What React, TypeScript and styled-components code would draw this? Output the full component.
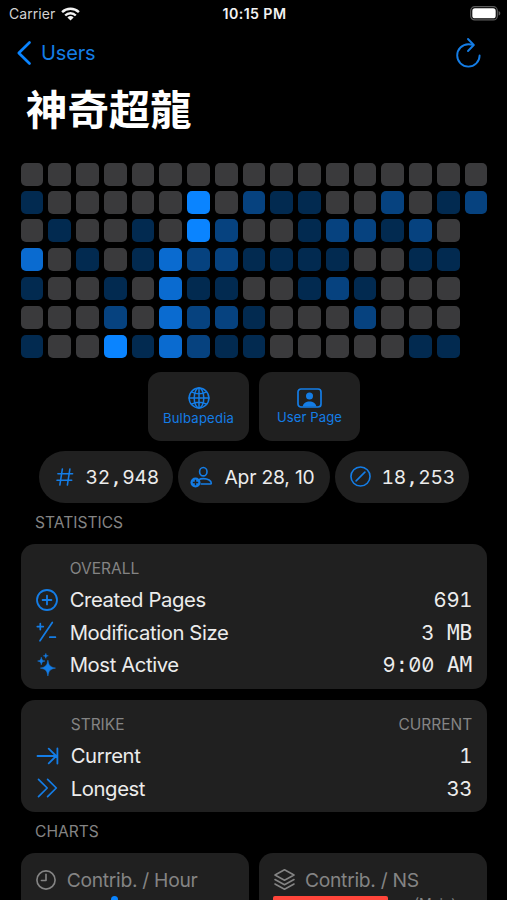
import React from "react";
import styled, { createGlobalStyle } from "styled-components";

const BLUE = "#0a84ff";
const ICON_BLUE = "#147de6";
const CARD = "#202020";
const MUTED = "#848484";

const GlobalStyle = createGlobalStyle`
  html, body { margin: 0; background: #000; }
  body {
    height: 900px;
    overflow: hidden;
    font-family: Inter, "Noto Sans CJK TC", sans-serif;
    color: #ececec;
    -webkit-font-smoothing: antialiased;
  }
  svg { display: block; flex: none; overflow: visible; }
`;

const Screen = styled.main`
  width: 507px;
  height: 900px;
  overflow: hidden;
  display: flex;
  flex-direction: column;
  background: #000;

  & > * {
    flex: none;
  }
`;

const StatusBar = styled.header`
  display: grid;
  grid-template-columns: 1fr auto 1fr;
  align-items: center;
  height: 27px;
  padding: 0 7px 0 9px;
  box-sizing: border-box;
  font-size: 14px;
  line-height: 27px;
`;

const Carrier = styled.div`
  display: flex;
  align-items: center;
  gap: 6px;
  color: #d2d2d2;
  letter-spacing: 0.05px;
`;

const Time = styled.time`
  font-weight: 600;
  font-size: 14.2px;
  letter-spacing: 0.4px;
  color: #f2f2f2;
`;

const Battery = styled.div`
  justify-self: end;
`;

const NavBar = styled.nav`
  display: flex;
  align-items: center;
  justify-content: space-between;
  height: 51px;
  padding: 0 26px 0 17px;
`;

const BackLink = styled.a`
  display: flex;
  align-items: center;
  gap: 10px;
  color: #147de6;
  font-size: 20px;
  line-height: 24px;
  letter-spacing: -0.15px;
`;

const Title = styled.h1`
  margin: 0;
  height: 85.3px;
  padding-left: 26px;
  font: 700 41.4px/59px "Noto Sans CJK TC", sans-serif;
  color: #fff;
`;

const HeatMap = styled.div`
  display: grid;
  grid-template-columns: repeat(17, 22.8px);
  grid-template-rows: 28px 28px 29px 29px 28.8px 29px 23px;
  column-gap: 4.96px;
  padding-left: 20.7px;
`;

const levels = ["#3a3a3c", "#022a50", "#06427f", "#0a6bd0", "#0a84ff"];

const Day = styled.i<{ $level: number; $row: number; $column: number }>`
  grid-row: ${(p) => p.$row};
  grid-column: ${(p) => p.$column};
  height: 23px;
  border-radius: 5px;
  background: ${(p) => levels[p.$level]};
`;

const LinkTiles = styled.div`
  display: flex;
  justify-content: center;
  gap: 10px;
  margin-top: 14.4px;
  padding-left: 1px;
`;

const Tile = styled.a<{ $wide?: boolean }>`
  width: 101px;
  height: 68.5px;
  box-sizing: border-box;
  padding-top: ${(p) => (p.$wide ? 16 : 15)}px;
  border-radius: 13px;
  background: ${CARD};
  display: flex;
  flex-direction: column;
  align-items: center;
  gap: 1px;
  color: ${ICON_BLUE};
  font-size: 13.1px;
  line-height: 16px;
  letter-spacing: ${(p) => (p.$wide ? 0.1 : 0.2)}px;
`;

const Pills = styled.div`
  display: grid;
  grid-template-columns: 134px 152px 134px;
  justify-content: center;
  gap: 5px;
  margin-top: 9.7px;
`;

const Pill = styled.div<{ $gap: number; $inset: number }>`
  height: 52px;
  box-sizing: border-box;
  padding-left: ${(p) => p.$inset}px;
  border-radius: 26px;
  background: ${CARD};
  display: flex;
  align-items: center;
  gap: ${(p) => p.$gap}px;
  font-size: 19.3px;
  white-space: nowrap;
`;

const DateText = styled.span`
  letter-spacing: -0.2px;
`;

const FixedWidth = styled.span`
  font-feature-settings: "tnum", "zero";
  letter-spacing: -0.2px;
  white-space: pre;
`;

const Glyphs = styled.span`
  font-family: "DejaVu Sans Mono", monospace;
  font-size: 1.04em;
  line-height: 1;
  letter-spacing: 0;
`;

const SectionLabel = styled.h2<{ $height: number; $line: number }>`
  margin: 0;
  height: ${(p) => p.$height}px;
  padding-left: 35px;
  font-size: 15.6px;
  font-weight: 400;
  line-height: ${(p) => p.$line}px;
  color: ${MUTED};
`;

const Card = styled.section<{ $height: number }>`
  height: ${(p) => p.$height}px;
  box-sizing: border-box;
  margin: 0 19.7px 10.5px 20.7px;
  padding: 14px 15px 0 15px;
  border-radius: 14px;
  background: ${CARD};
`;

const CardHeading = styled.div<{ $indent: number }>`
  display: flex;
  justify-content: space-between;
  padding-left: ${(p) => p.$indent}px;
  height: 26px;
  font-size: 15.5px;
  line-height: 21.5px;
  color: ${MUTED};
`;

const Row = styled.div<{ $gap?: number }>`
  display: grid;
  grid-template-columns: 23px 1fr auto;
  column-gap: ${(p) => p.$gap ?? 11}px;
  align-items: center;
  height: 32.4px;
  font-size: 20.3px;
`;

const Label = styled.span`
  letter-spacing: -0.4px;
`;

const Charts = styled.div`
  display: grid;
  grid-template-columns: 228.3px 228.3px;
  gap: 10px;
  padding-left: 20.7px;
`;

const ChartCard = styled.section`
  height: 60px;
  border-radius: 14px 14px 0 0;
  background: ${CARD};
  padding: 15px 14px 0;
`;

const ChartTitle = styled.h3<{ $gap: number }>`
  margin: 0;
  padding-left: 1px;
  display: flex;
  align-items: center;
  gap: ${(p) => p.$gap}px;
  height: 23px;
  font-size: 19.3px;
  font-weight: 400;
  color: ${MUTED};
  letter-spacing: -0.3px;
`;

const HourPoint = styled.div`
  width: 7px;
  height: 7px;
  margin: 4.5px 0 0 76px;
  border-radius: 50%;
  background: ${BLUE};
`;

const BarLine = styled.div`
  display: flex;
  gap: 26px;
  margin-top: 4.5px;
`;

const RedBar = styled.div`
  width: 115px;
  height: 16px;
  border-radius: 2px;
  background: #ff453a;
`;

const BarLabel = styled.span`
  font-size: 14px;
  line-height: 15px;
  color: ${MUTED};
`;

const year = [
  "00000000000000000",
  "10000040211002012",
  "0100104200122120",
  "3010132211110011",
  "1001031100121000",
  "0002032210002000",
  "1004132110000011",
];

const Value = ({ children }: { children: string }) => (
  <FixedWidth>
    {children.split(/(\D+)/).map((part, i) => (i % 2 ? <Glyphs key={i}>{part}</Glyphs> : part))}
  </FixedWidth>
);

type StrokeProps = { size?: number; width?: number; children: React.ReactNode; color?: string };

const Stroke = ({ size = 22, width = 1.7, color = ICON_BLUE, children }: StrokeProps) => (
  <svg width={size} height={size} viewBox="0 0 22 22" fill="none" stroke={color} strokeWidth={width} strokeLinecap="round" strokeLinejoin="round">
    {children}
  </svg>
);

const Wifi = () => (
  <svg width="19" height="14" viewBox="0 0 19 14" fill="none" stroke="#f2f2f2" strokeWidth="2.4">
    <path d="M1.1 5.2a12 12 0 0 1 16.8 0" />
    <path d="M4.2 8.5a7.5 7.5 0 0 1 10.6 0" />
    <path d="M9.5 13.4 6.4 10.5a4.6 4.6 0 0 1 6.2 0Z" fill="#f2f2f2" stroke="none" />
  </svg>
);

const BatteryIcon = () => (
  <svg width="30" height="15" viewBox="0 0 30 15">
    <rect x=".7" y=".7" width="26.6" height="13.2" rx="4" fill="none" stroke="#5c5c5c" strokeWidth="1.2" />
    <rect x="2.3" y="2.3" width="23.4" height="10" rx="2.6" fill="#fff" />
    <path d="M28.6 5v4.6c2.3-.8 2.3-3.8 0-4.6Z" fill="#5c5c5c" />
  </svg>
);

const Reload = () => (
  <svg width="25" height="30" viewBox="0 0 25 30" fill="none" stroke={ICON_BLUE} strokeWidth="1.9" strokeLinecap="round" strokeLinejoin="round">
    <path d="M23.6 17.4A11.2 11.2 0 1 1 12.4 6.2c1.7 0 3.2.2 4.9.9" />
    <path d="m12 1 5.8 6-5.8 6" />
  </svg>
);

const Globe = () => (
  <Stroke width={1.5}>
    <circle cx="11" cy="11" r="9.9" />
    <ellipse cx="11" cy="11" rx="4.8" ry="9.9" />
    <path d="M11 1v20M1 11h20M3.6 4.8c4.2 2.6 10.6 2.6 14.8 0M3.6 17.2c4.2-2.6 10.6-2.6 14.8 0" />
  </Stroke>
);

const Portrait = () => (
  <svg width="25" height="20" viewBox="0 0 25 20">
    <rect x="1" y="1" width="23" height="18" rx="3" fill="none" stroke={ICON_BLUE} strokeWidth="1.7" />
    <circle cx="12.5" cy="7.9" r="3.5" fill={ICON_BLUE} />
    <path d="M5.7 18.4c.6-3 3.3-4.9 6.8-4.9s6.2 1.9 6.8 4.9Z" fill={ICON_BLUE} />
  </svg>
);

const Hash = () => (
  <Stroke size={18} width={1.9}>
    <path d="M7.8 1.2 4.7 20.8M17 1.2l-3.1 19.6M2.3 7h18M1.2 15h18" />
  </Stroke>
);

const AddPerson = () => (
  <svg width="23" height="22" viewBox="0 0 23 22" fill="none" stroke={ICON_BLUE} strokeWidth="1.6">
    <ellipse cx="13.3" cy="5.7" rx="3.7" ry="4.2" />
    <path d="M8.6 13.8c1.2-.8 2.9-1.2 4.9-1.2 4.7 0 7.8 2.3 7.8 4.6 0 .6-.4.8-1 .8h-9.1" strokeLinecap="round" />
    <circle cx="5.5" cy="16.5" r="5" fill={ICON_BLUE} stroke="none" />
    <path d="M5.5 13.8v5.4M2.8 16.5h5.4" stroke={CARD} strokeWidth="1.4" />
  </svg>
);

const SlashCircle = () => (
  <Stroke size={21}>
    <circle cx="11" cy="11" r="10" />
    <path d="m6.4 15.6 9.2-9.2" />
  </Stroke>
);

const PlusCircle = () => (
  <Stroke width={1.8}>
    <circle cx="11" cy="11" r="10" />
    <path d="M11 6.6v8.8M6.6 11h8.8" />
  </Stroke>
);

const PlusMinus = () => (
  <Stroke>
    <path d="M16.3 1.5 4 19.8M4.3 2.6v6M1.3 5.6h6M13.8 16.2h5.6" />
  </Stroke>
);

const Sparkles = () => (
  <svg width="22" height="24" viewBox="0 0 22 24" fill={ICON_BLUE} stroke={ICON_BLUE} strokeWidth=".5" strokeLinejoin="round">
    <path d="M11.9 7.2c1 5.5 2.2 6.8 7.6 7.9-5.4 1.1-6.6 2.4-7.6 7.9-1-5.5-2.2-6.8-7.6-7.9 5.4-1.1 6.6-2.4 7.6-7.9Z" />
    <path d="M5.3 4.2c.5 2.7 1.1 3.3 3.7 3.8-2.6.5-3.2 1.1-3.7 3.8C4.8 9.1 4.2 8.5 1.6 8c2.6-.5 3.2-1.1 3.7-3.8Z" />
    <path d="M9.8.4c.4 1.7.8 2.1 2.5 2.4-1.7.4-2.1.8-2.5 2.5-.4-1.7-.8-2.1-2.5-2.5 1.7-.3 2.1-.7 2.5-2.4Z" />
  </svg>
);

const ArrowToLine = () => (
  <Stroke width={1.8}>
    <path d="M1.5 11h18.7M12.7 3.7 20.2 11l-7.5 7.3M21.4 3.5v15" />
  </Stroke>
);

const Chevrons = () => (
  <Stroke width={1.7}>
    <path d="m2.5 2.4 8.7 8.6-8.7 8.6M11.6 2.4l8.7 8.6-8.7 8.6" />
  </Stroke>
);

const Clock = () => (
  <Stroke size={20} color={MUTED} width={1.8}>
    <circle cx="11" cy="11" r="10" />
    <path d="M11 4.8V11.5H6" />
  </Stroke>
);

const Layers = () => (
  <Stroke size={21} color={MUTED} width={1.6}>
    <path d="m11 .8 10 5.5-10 5.5-10-5.5ZM1 11l10 5.5L21 11M1 15.7l10 5.5 10-5.5" />
  </Stroke>
);

export default function App() {
  return (
    <Screen>
      <GlobalStyle />
      <StatusBar>
        <Carrier>
          Carrier
          <Wifi />
        </Carrier>
        <Time>10:15 PM</Time>
        <Battery>
          <BatteryIcon />
        </Battery>
      </StatusBar>
      <NavBar>
        <BackLink>
          <svg width="14" height="24" viewBox="0 0 14 24" fill="none" stroke={BLUE} strokeWidth="2.7" strokeLinecap="round" strokeLinejoin="round">
            <path d="M12.5 1.5 1.8 12l10.7 10.5" />
          </svg>
          Users
        </BackLink>
        <Reload />
      </NavBar>
      <Title>神奇超龍</Title>
      <HeatMap>
        {year.flatMap((days, row) =>
          [...days].map((level, column) => (
            <Day key={`${row}-${column}`} $level={Number(level)} $row={row + 1} $column={column + 1} />
          ))
        )}
      </HeatMap>
      <LinkTiles>
        <Tile>
          <Globe />
          Bulbapedia
        </Tile>
        <Tile $wide>
          <Portrait />
          User Page
        </Tile>
      </LinkTiles>
      <Pills>
        <Pill $inset={17} $gap={12}>
          <Hash />
          <Value>32,948</Value>
        </Pill>
        <Pill $inset={12} $gap={12}>
          <AddPerson />
          <DateText>Apr 28, 10</DateText>
        </Pill>
        <Pill $inset={15} $gap={11}>
          <SlashCircle />
          <Value>18,253</Value>
        </Pill>
      </Pills>
      <SectionLabel $height={41} $line={39.5}>STATISTICS</SectionLabel>
      <Card $height={145.5}>
        <CardHeading $indent={34}>
          <span>OVERALL</span>
        </CardHeading>
        <Row>
          <PlusCircle />
          <Label>Created Pages</Label>
          <Value>691</Value>
        </Row>
        <Row>
          <PlusMinus />
          <Label>Modification Size</Label>
          <Value>3 MB</Value>
        </Row>
        <Row>
          <Sparkles />
          <Label>Most Active</Label>
          <Value>9:00 AM</Value>
        </Row>
      </Card>
      <Card $height={112.5}>
        <CardHeading $indent={35}>
          <span>STRIKE</span>
          <span>CURRENT</span>
        </CardHeading>
        <Row $gap={12}>
          <ArrowToLine />
          <Label>Current</Label>
          <Value>1</Value>
        </Row>
        <Row $gap={12}>
          <Chevrons />
          <Label>Longest</Label>
          <Value>33</Value>
        </Row>
      </Card>
      <SectionLabel $height={30.7} $line={17}>CHARTS</SectionLabel>
      <Charts>
        <ChartCard>
          <ChartTitle $gap={11}>
            <Clock />
            Contrib. / Hour
          </ChartTitle>
          <HourPoint />
        </ChartCard>
        <ChartCard>
          <ChartTitle $gap={10}>
            <Layers />
            Contrib. / NS
          </ChartTitle>
          <BarLine>
            <RedBar />
            <BarLabel>(Main)</BarLabel>
          </BarLine>
        </ChartCard>
      </Charts>
    </Screen>
  );
}
